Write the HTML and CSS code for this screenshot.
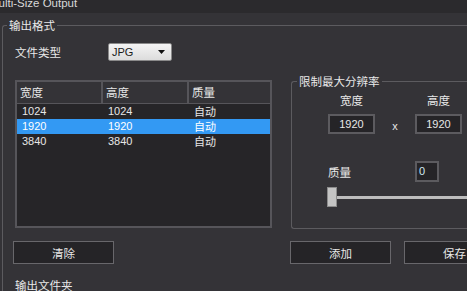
FILE: index.html
```html
<!DOCTYPE html>
<html lang="zh-CN">
<head>
  <meta charset="UTF-8">
  <title>Multi-Size Output</title>
  <link rel="stylesheet" href="styles.css">
</head>
<body>
  <div class="titlebar"><span class="title">Multi-Size Output</span></div>

  <!-- 输出格式 -->
  <fieldset class="group outer">
    <legend>输出格式</legend>

    <div class="type-row">
      <span class="label">文件类型</span>
      <div class="combo">
        <span>JPG</span>
        <svg class="arrow" width="7" height="4" viewBox="0 0 7 4"><path d="M0 0H7L3.5 4Z" fill="#111"/></svg>
      </div>
    </div>

    <div class="columns">
      <div class="left-col">
        <div class="table">
          <div class="row head">
            <div class="cell">宽度</div>
            <div class="cell">高度</div>
            <div class="cell">质量</div>
          </div>
          <div class="row">
            <div class="cell num">1024</div>
            <div class="cell num">1024</div>
            <div class="cell">自动</div>
          </div>
          <div class="row selected">
            <div class="cell num">1920</div>
            <div class="cell num">1920</div>
            <div class="cell">自动</div>
          </div>
          <div class="row">
            <div class="cell num">3840</div>
            <div class="cell num">3840</div>
            <div class="cell">自动</div>
          </div>
        </div>
        <button class="btn">清除</button>
      </div>

      <div class="right-col">
        <fieldset class="group limit">
          <legend>限制最大分辨率</legend>
          <div class="size-grid">
            <span class="label center">宽度</span>
            <span></span>
            <span class="label center">高度</span>
            <div class="field">1920</div>
            <span class="times">x</span>
            <div class="field">1920</div>
          </div>
          <div class="quality-row">
            <span class="label">质量</span>
            <div class="field small">0</div>
          </div>
          <div class="slider">
            <div class="handle"></div>
            <div class="track"></div>
          </div>
        </fieldset>
        <div class="btn-row">
          <button class="btn">添加</button>
          <button class="btn">保存</button>
        </div>
      </div>
    </div>

    <div class="label folder">输出文件夹</div>
  </fieldset>
</body>
</html>
```

FILE: styles.css
```css
body {
  margin: 0;
  width: 467px;
  height: 291px;
  overflow: hidden;
  background: #343337;
  color: #e6e6e6;
  font-family: "Noto Sans CJK SC", "Noto Sans", sans-serif;
  font-size: 11.5px;
}
.titlebar {
  height: 13px;
  overflow: hidden;
  background: #2b2a2d;
}
.title {
  display: block;
  margin-top: -5px;
  margin-left: -11px;
  line-height: 17px;
  font-family: "Liberation Sans", Arial, sans-serif;
  font-size: 11.5px;
  color: #d8d8d8;
  white-space: nowrap;
}
.group {
  border: 1px solid #5c5b5f;
  border-radius: 3px;
  margin: 0;
  padding: 0;
  min-width: 0;
}
.group legend {
  padding: 0 2px;
  line-height: 14px;
  font-size: 11.5px;
  color: #e8e8e8;
}
.outer {
  margin: 5px 0 0 2px;
  width: 500px;
  height: 300px;
  border-right: none;
  border-bottom: none;
  padding: 0 0 0 10px;
}
.outer > legend {
  margin-left: -6px;
}
.label {
  color: #e8e8e8;
  font-size: 11.5px;
  line-height: 14px;
}
.type-row {
  display: flex;
  align-items: center;
  margin-top: 11px;
  padding-left: 2px;
}
.combo {
  margin-left: 47px;
  display: flex;
  align-items: center;
  justify-content: space-between;
  padding: 0 6px 0 3px;
  box-sizing: border-box;
  width: 64px;
  height: 18px;
  border: 1px solid #8a8a8a;
  border-radius: 2px;
  background: linear-gradient(#f4f4f4, #dcdcdc);
  color: #1c1c1c;
  font-family: "Liberation Sans", Arial, sans-serif;
  font-size: 11px;
}
.columns {
  display: grid;
  grid-template-columns: 259px 1fr;
  column-gap: 19px;
  margin-top: 13px;
  align-items: start;
}
.table {
  margin: 6px 0 0 2px;
  width: 257px;
  height: 148px;
  box-sizing: border-box;
  border: 2px solid #56555a;
  background: #262528;
}
.row {
  display: grid;
  grid-template-columns: 86px 86px 1fr;
  height: 15px;
  line-height: 15px;
  font-size: 11px;
}
.row.head {
  height: 21px;
  line-height: 21px;
  font-size: 11.5px;
  background: #343337;
  border-bottom: 1px solid #56555a;
}
.head .cell {
  border-right: 2px solid #56555a;
  padding-left: 3px;
}
.head .cell:last-child {
  border-right: none;
}
.cell {
  padding-left: 5px;
  white-space: nowrap;
  overflow: hidden;
}
.num {
  font-family: "Liberation Sans", Arial, sans-serif;
  font-size: 11px;
}
.row.selected {
  background: #3399f3;
  color: #fff;
}
.btn {
  display: block;
  width: 101px;
  height: 23px;
  padding: 0;
  border: 1px solid #68676b;
  background: #252427;
  color: #e8e8e8;
  font-family: "Noto Sans CJK SC", sans-serif;
  font-size: 11.5px;
}
.left-col .btn {
  margin-top: 13px;
}
.limit {
  width: 200px;
  height: 155px;
  box-sizing: border-box;
  border-right: none;
  padding: 0 0 0 36px;
}
.limit legend {
  margin-left: -31px;
}
.size-grid {
  display: grid;
  grid-template-columns: 47px 40px 47px;
  row-gap: 7px;
  align-items: center;
  margin-top: 5px;
}
.center {
  text-align: center;
}
.field {
  height: 20px;
  box-sizing: border-box;
  border: 2px solid #5c5b5f;
  background: #252427;
  color: #e8e8e8;
  font-family: "Liberation Sans", Arial, sans-serif;
  font-size: 11px;
  line-height: 16px;
  text-align: center;
}
.times {
  text-align: center;
  font-family: "Liberation Sans", Arial, sans-serif;
  font-size: 11px;
  margin-top: 4px;
}
.quality-row {
  display: grid;
  grid-template-columns: 87px 24px;
  align-items: center;
  margin-top: 27px;
}
.field.small {
  height: 21px;
  text-align: left;
  padding-left: 2px;
  line-height: 17px;
  color: #cfe8f0;
}
.slider {
  display: flex;
  align-items: center;
  margin: 5px 0 0 -1px;
}
.handle {
  width: 10px;
  height: 20px;
  box-sizing: border-box;
  border: 1px solid #8c8c8c;
  background: #c4c4c4;
}
.track {
  flex: 1;
  height: 3px;
  background: #bdbdbd;
}
.btn-row {
  display: flex;
  gap: 13px;
  margin-top: 12px;
  margin-left: -1px;
}
.folder {
  margin-top: 14px;
  padding-left: 2px;
}
```
